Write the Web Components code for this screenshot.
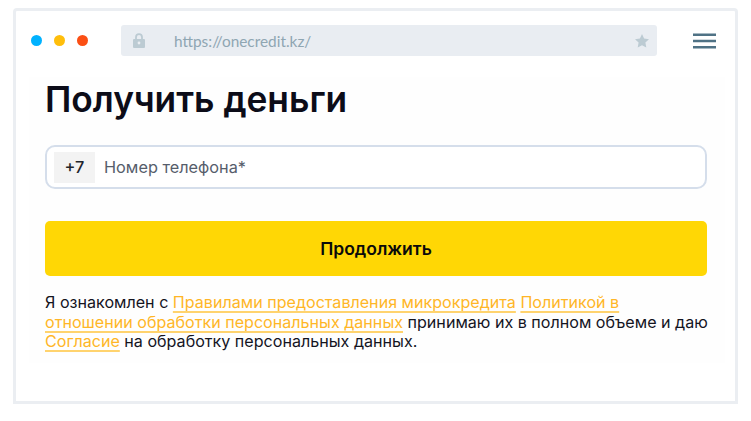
<!DOCTYPE html>
<html lang="ru">
<head>
<meta charset="utf-8">
<title>Получить деньги</title>
<style>
    html, body { margin: 0; background: #fff; }
    body { width: 751px; height: 421px; overflow: hidden; font-family: Inter, "Liberation Sans", sans-serif; }
</style>
</head>
<body>
<browser-frame url="https://onecredit.kz/">
    <loan-form heading="Получить деньги">
        <phone-field slot="field" prefix="+7" placeholder="Номер телефона*"></phone-field>
        <yellow-button slot="action">Продолжить</yellow-button>
        <span slot="terms">Я ознакомлен с <terms-link>Правилами предоставления микрокредита</terms-link> <terms-link>Политикой в</terms-link><br><terms-link>отношении обработки персональных данных</terms-link> принимаю их в полном объеме и даю <terms-link>Согласие</terms-link> на обработку персональных данных.</span>
    </loan-form>
</browser-frame>

<script>
class BrowserFrame extends HTMLElement {
    constructor() {
        super()
        this.attachShadow({ mode: 'open' })
        this.shadowRoot.innerHTML = `
            <style>
                :host {
                    display: block;
                    box-sizing: border-box;
                    width: 725px;
                    height: 396px;
                    margin: 8px 0 0 13px;
                    border: 3px solid #ebeef2;
                    border-radius: 4px 4px 0 0;
                    background: #fff;
                }
                .bar {
                    display: flex;
                    align-items: center;
                    height: 31px;
                    margin-top: 14px;
                    padding-left: 15px;
                }
                .dots { display: flex; gap: 12px; width: 90px; }
                .dots i { width: 11px; height: 11px; border-radius: 50%; }
                .address {
                    flex: none;
                    display: flex;
                    align-items: center;
                    box-sizing: border-box;
                    width: 536px;
                    height: 31px;
                    padding: 0 8px 0 12px;
                    border-radius: 3px;
                    background: #e9edf2;
                    color: #8fa6b2;
                    font: 15.4px Lato, "Open Sans", sans-serif;
                }
                .url { flex: 1; margin-left: 29px; }
                .burger { margin-left: 36px; display: block; }
                .page { margin: 21px 10px 0 13px; height: 286px; background: #fefefe; }
            </style>
            <div class="bar">
                <div class="dots">
                    <i style="background:#00b2ff"></i>
                    <i style="background:#ffbe0b"></i>
                    <i style="background:#fb4f14"></i>
                </div>
                <div class="address">
                    <svg width="12" height="15" viewBox="0 0 12 15">
                        <path d="M3 6.5V4.2a3 3 0 0 1 6 0v2.3" fill="none" stroke="#bccbd3" stroke-width="1.8"/>
                        <path d="M1 6h10a1 1 0 0 1 1 1v7a1 1 0 0 1-1 1H1a1 1 0 0 1-1-1V7a1 1 0 0 1 1-1z" fill="#bccbd3"/>
                        <circle cx="6" cy="10" r="1.4" fill="#e9edf2"/>
                    </svg>
                    <span class="url">${this.getAttribute('url')}</span>
                    <svg width="14" height="14" viewBox="0 0 14 14">
                        <path d="M7 0l2.1 4.6 4.9.6-3.600 3.400.9 5L7 11.200 2.700 13.600l.9-5L0 5.200l4.900-.6z" fill="#bccbd3"/>
                    </svg>
                </div>
                <svg class="burger" width="23" height="16" viewBox="0 0 23 16">
                    <path d="M0 1.800h23M0 8h23M0 14.200h23" stroke="#4f7285" stroke-width="2.600"/>
                </svg>
            </div>
            <div class="page"><slot></slot></div>
        `
    }
}

class LoanForm extends HTMLElement {
    constructor() {
        super()
        this.attachShadow({ mode: 'open' })
        this.shadowRoot.innerHTML = `
            <style>
                :host { display: block; padding: 0 18px 0 16px; color: #0c0c18; }
                h1 {
                    margin: 0;
                    padding-top: 1px;
                    height: 67px;
                    font: 600 35.300px/44px Inter, "Liberation Sans", sans-serif;
                }
                .terms {
                    margin-top: 17px;
                    margin-right: -6px;
                    font: 16.100px/19.600px Inter, "Liberation Sans", sans-serif;
                    color: #14141f;
                }
                .action { margin-top: 32px; }
            </style>
            <h1>${this.getAttribute('heading')}</h1>
            <slot name="field"></slot>
            <div class="action"><slot name="action"></slot></div>
            <div class="terms"><slot name="terms"></slot></div>
        `
    }
}

class PhoneField extends HTMLElement {
    constructor() {
        super()
        this.attachShadow({ mode: 'open' })
        this.shadowRoot.innerHTML = `
            <style>
                :host {
                    display: flex;
                    align-items: center;
                    box-sizing: border-box;
                    height: 44px;
                    padding-left: 7px;
                    border: 2px solid #d5deeb;
                    border-radius: 10px;
                    background: #fff;
                    font: 16.300px Inter, "Liberation Sans", sans-serif;
                }
                .prefix {
                    width: 41px;
                    height: 31px;
                    line-height: 30px;
                    text-align: center;
                    background: #f3f3f3;
                    color: #22252c;
                    font-weight: 500;
                }
                .placeholder { margin-left: 9px; color: #565d6b; }
            </style>
            <span class="prefix">${this.getAttribute('prefix')}</span>
            <span class="placeholder">${this.getAttribute('placeholder')}</span>
        `
    }
}

class YellowButton extends HTMLElement {
    constructor() {
        super()
        this.attachShadow({ mode: 'open' })
        this.shadowRoot.innerHTML = `
            <style>
                :host {
                    display: flex;
                    align-items: center;
                    justify-content: center;
                    height: 55px;
                    border-radius: 5px;
                    background: #ffd705;
                    color: #0a0a0a;
                    font: 600 17.500px Inter, "Liberation Sans", sans-serif;
                }
            </style>
            <slot></slot>
        `
    }
}

class TermsLink extends HTMLElement {
    constructor() {
        super()
        this.attachShadow({ mode: 'open' })
        // no whitespace after the slot, it would get underlined too
        this.shadowRoot.innerHTML = `<style>
                :host {
                    color: #ffb627;
                    text-decoration: underline 2px #ffd36e;
                    text-underline-offset: 3px;
                    text-decoration-skip-ink: none;
                }
            </style><slot></slot>`
    }
}

customElements.define('browser-frame', BrowserFrame)
customElements.define('loan-form', LoanForm)
customElements.define('phone-field', PhoneField)
customElements.define('yellow-button', YellowButton)
customElements.define('terms-link', TermsLink)
</script>
</body>
</html>
